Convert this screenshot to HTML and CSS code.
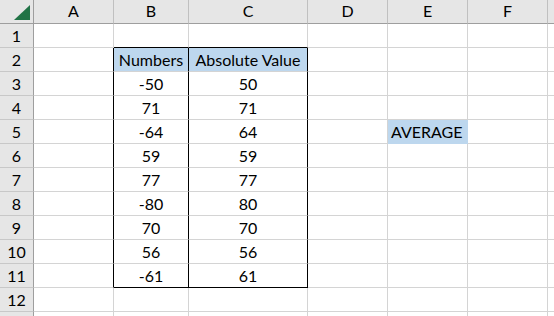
FILE: index.html
```html
<!DOCTYPE html>
<html lang="en">
<head>
  <meta charset="UTF-8">
  <title>Absolute Value</title>
  <link rel="stylesheet" href="styles.css">
</head>
<body>
  <div class="window">
    <div class="sheet">
      <div class="corner"><span class="select-all"></span></div>
      <div class="col-head">A</div>
      <div class="col-head">B</div>
      <div class="col-head">C</div>
      <div class="col-head">D</div>
      <div class="col-head">E</div>
      <div class="col-head">F</div>
      <div class="col-head"></div>

      <div class="row-head">1</div>
      <div class="cell"></div><div class="cell box-top"></div><div class="cell box-top"></div><div class="cell"></div><div class="cell"></div><div class="cell"></div><div class="cell"></div>

      <div class="row-head">2</div>
      <div class="cell box-left"></div><div class="cell box-in title">Numbers</div><div class="cell box-in title">Absolute Value</div><div class="cell"></div><div class="cell"></div><div class="cell"></div><div class="cell"></div>
    </div>
  </div>
  <script>
    // sisa baris diisi dari data
    const rows = [[-50, 50], [71, 71], [-64, 64], [59, 59], [77, 77], [-80, 80], [70, 70], [56, 56], [-61, 61]];
    const sheet = document.querySelector('.sheet');
    const add = (cls, text) => {
      const el = document.createElement('div');
      el.className = cls;
      el.textContent = text || '';
      sheet.appendChild(el);
    };
    rows.forEach((r, i) => {
      const n = i + 3;
      const last = i === rows.length - 1;
      add('row-head', n);
      add('cell box-left');
      add('cell box-in center' + (last ? ' box-bottom' : ''), r[0]);
      add('cell box-in center' + (last ? ' box-bottom' : ''), r[1]);
      add('cell');
      add(n === 5 ? 'cell fill' : 'cell', n === 5 ? 'AVERAGE' : '');
      add('cell');
      add('cell');
    });
    add('row-head', 12);
    for (let c = 0; c < 7; c++) add('cell');
    // baris 13 hanya garis atasnya yang kelihatan
    add('row-head');
    for (let c = 0; c < 7; c++) add('cell');
  </script>
</body>
</html>
```
FILE: styles.css
```css
html, body {
  margin: 0;
  background: #fff;
}
.window {
  width: 554px;
  height: 316px;
  overflow: hidden;
}
.sheet {
  display: grid;
  grid-template-columns: 34px 80px 75px 119px 80px 80px 80px 80px;
  grid-auto-rows: 24px;
  font-family: "Lato", "Open Sans", sans-serif;
  font-size: 16px;
  color: #000;
}
.sheet > div {
  box-sizing: border-box;
  border-right: 1px solid #d4d4d4;
  border-bottom: 1px solid #d4d4d4;
  display: flex;
  align-items: flex-end;
  padding: 0 3px 2px;
  white-space: nowrap;
  overflow: hidden;
}
.sheet > .corner {
  background: #e6e6e6;
  border-right: 1px solid #9e9e9e;
  border-bottom: 1px solid #9e9e9e;
  position: relative;
  padding: 0;
}
.select-all {
  position: absolute;
  left: 14px;
  top: 5px;
  width: 0;
  height: 0;
  border-left: 16px solid transparent;
  border-bottom: 15px solid #217346;
}
.sheet > .col-head {
  background: #e6e6e6;
  border-right: 1px solid #c0c0c0;
  border-bottom: 1px solid #9e9e9e;
  justify-content: center;
  padding-bottom: 3px;
}
.sheet > .row-head {
  background: #e6e6e6;
  border-right: 1px solid #9e9e9e;
  border-bottom: 1px solid #c8c8c8;
  justify-content: center;
}
.sheet > .box-top {
  border-bottom-color: #000;
}
.sheet > .box-left,
.sheet > .box-in {
  border-right-color: #000;
}
.sheet > .box-bottom {
  border-bottom-color: #000;
}
.title {
  background: #bdd7ee;
  justify-content: center;
}
.center {
  justify-content: center;
}
.sheet > .fill {
  background: #bdd7ee;
  border-color: #bdd7ee;
}
```
